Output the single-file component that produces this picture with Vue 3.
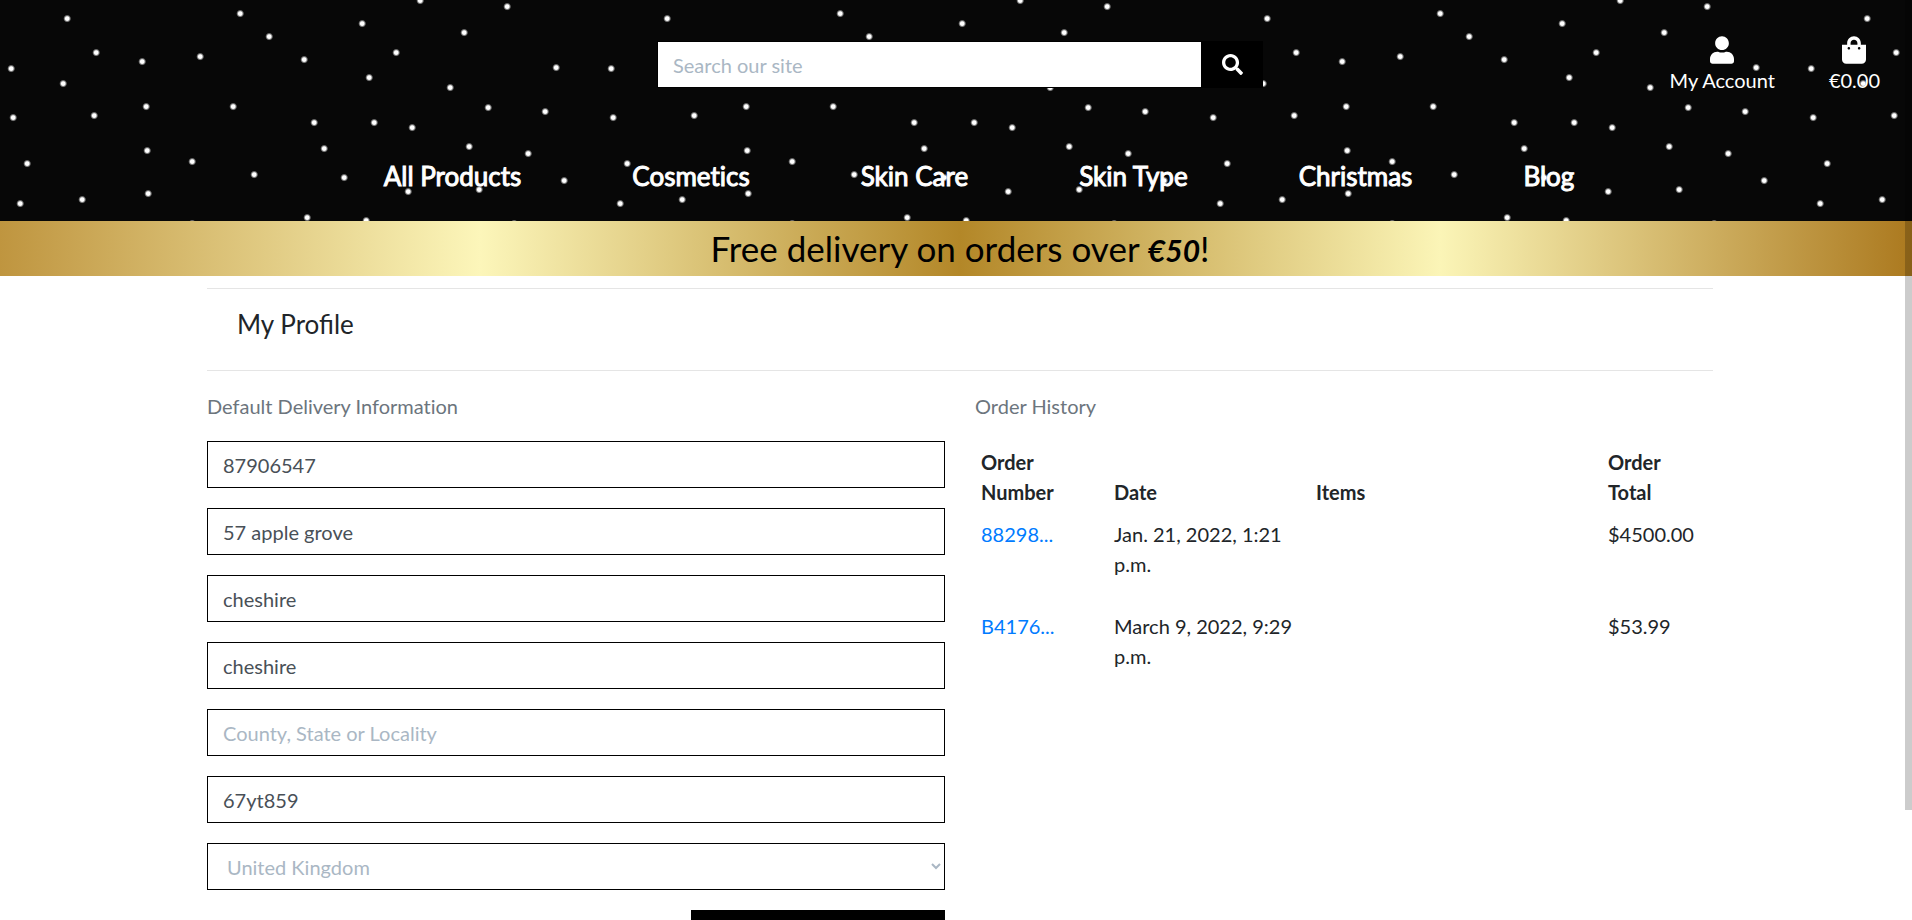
<script setup>
import { ref } from 'vue'

const stars = [
  [67, 18], [240, 13], [420, 0], [362, 23], [464, 32], [269, 36], [96, 52], [142, 61],
  [200, 56], [304, 59], [396, 52], [11, 68], [63, 83], [369, 77], [450, 87], [13, 117],
  [94, 115], [146, 106], [233, 106], [314, 122], [374, 122], [412, 127], [469, 146],
  [147, 150], [192, 161], [324, 148], [27, 163], [254, 174], [344, 177], [20, 203],
  [82, 199], [148, 193], [408, 191], [479, 189], [307, 217], [366, 220], [192, 223],
  [507, 6], [556, 67], [488, 107], [545, 111], [528, 153], [564, 180], [514, 223]
]

const links = ['All Products', 'Cosmetics', 'Skin Care', 'Skin Type', 'Christmas', 'Blog']

const search = ref('')
const fields = ref([
  { id: 'phone', label: 'Phone Number', value: '87906547' },
  { id: 'street1', label: 'Street Address 1', value: '57 apple grove' },
  { id: 'street2', label: 'Street Address 2', value: 'cheshire' },
  { id: 'town', label: 'Town or City', value: 'cheshire' },
  { id: 'county', label: 'County, State or Locality', value: '' },
  { id: 'postcode', label: 'Postal Code', value: '67yt859' }
])
const country = ref('GB')

const orders = [
  { number: '88298...', date: 'Jan. 21, 2022, 1:21 p.m.', total: '$4500.00' },
  { number: 'B4176...', date: 'March 9, 2022, 9:29 p.m.', total: '$53.99' }
]
</script>

<template>
  <div class="viewport">
    <div class="page">
      <header class="header">
        <svg class="sky" aria-hidden="true">
          <defs>
            <radialGradient id="glow">
              <stop offset="0.45" stop-color="#fff" />
              <stop offset="0.7" stop-color="#fff" stop-opacity="0.5" />
              <stop offset="1" stop-color="#fff" stop-opacity="0" />
            </radialGradient>
            <pattern id="stars" width="600" height="240" patternUnits="userSpaceOnUse">
              <circle v-for="(s, i) in stars" :key="i" :cx="s[0] + 0.2" :cy="s[1] + 0.6" r="4" fill="url(#glow)" />
            </pattern>
          </defs>
          <rect width="100%" height="100%" fill="url(#stars)" />
        </svg>

        <div class="top">
          <form class="search" @submit.prevent>
            <input v-model="search" type="text" placeholder="Search our site" aria-label="Search our site" />
            <button type="submit" aria-label="Search">
              <svg viewBox="0 0 512 512" width="21" height="21"><path fill="currentColor" d="M505 442.7L405.3 343c-4.5-4.5-10.6-7-17-7H372c27.6-35.3 44-79.7 44-128C416 93.1 322.9 0 208 0S0 93.1 0 208s93.1 208 208 208c48.3 0 92.7-16.4 128-44v16.3c0 6.4 2.5 12.5 7 17l99.7 99.7c9.4 9.4 24.6 9.4 33.9 0l28.3-28.3c9.4-9.4 9.4-24.6.1-34zM208 336c-70.7 0-128-57.2-128-128 0-70.7 57.2-128 128-128 70.7 0 128 57.2 128 128 0 70.7-57.2 128-128 128z" /></svg>
            </button>
          </form>
          <div class="tools">
            <a href="#account" class="tool">
              <svg viewBox="0 0 448 512" width="24" height="28"><path fill="currentColor" d="M224 256c70.700 0 128-57.300 128-128S294.700 0 224 0 96 57.300 96 128s57.300 128 128 128zm89.600 32h-16.700c-22.200 10.200-46.900 16-72.900 16s-50.600-5.800-72.900-16h-16.700C60.200 288 0 348.200 0 422.400V464c0 26.500 21.500 48 48 48h352c26.500 0 48-21.500 48-48v-41.600c0-74.200-60.200-134.400-134.400-134.400z" /></svg>
              <span>My Account</span>
            </a>
            <a href="#bag" class="tool">
              <svg viewBox="0 0 448 512" width="24" height="28"><path fill="currentColor" d="M352 160v-32C352 57.420 294.579 0 224 0 153.420 0 96 57.420 96 128v32H0v272c0 44.183 35.817 80 80 80h288c44.183 0 80-35.817 80-80V160h-96zm-192-32c0-35.290 28.710-64 64-64s64 28.710 64 64v32H160v-32zm160 120c-13.255 0-24-10.745-24-24s10.745-24 24-24 24 10.745 24 24-10.745 24-24 24zm-192 0c-13.255 0-24-10.745-24-24s10.745-24 24-24 24 10.745 24 24-10.745 24-24 24z" /></svg>
              <span>€0.00</span>
            </a>
          </div>
        </div>

        <nav class="nav">
          <a v-for="l in links" :key="l" href="#">{{ l }}</a>
        </nav>
      </header>

      <div class="banner">Free delivery on orders over <em>€50</em>!</div>

      <main class="container">
        <h2 class="title">My Profile</h2>
        <div class="columns">
          <section>
            <p class="caption">Default Delivery Information</p>
            <form class="form" @submit.prevent>
              <input
                v-for="f in fields"
                :key="f.id"
                v-model="f.value"
                class="control"
                type="text"
                :placeholder="f.label"
                :aria-label="f.label"
              />
              <select v-model="country" class="control" aria-label="Country">
                <option value="GB">United Kingdom</option>
              </select>
              <button class="save" type="submit">Update Information</button>
            </form>
          </section>
          <section>
            <p class="caption">Order History</p>
            <table class="orders">
              <colgroup>
                <col class="c-number" />
                <col class="c-date" />
                <col />
                <col class="c-total" />
              </colgroup>
              <thead>
                <tr>
                  <th>Order Number</th>
                  <th>Date</th>
                  <th>Items</th>
                  <th>Order Total</th>
                </tr>
              </thead>
              <tbody>
                <tr v-for="o in orders" :key="o.number">
                  <td><a href="#">{{ o.number }}</a></td>
                  <td>{{ o.date }}</td>
                  <td></td>
                  <td>{{ o.total }}</td>
                </tr>
              </tbody>
            </table>
          </section>
        </div>
      </main>
    </div>
    <div class="scroll-thumb"></div>
  </div>
</template>

<style>
body {
  margin: 0;
  background: #fff;
}
</style>

<style scoped>
* {
  box-sizing: border-box;
}
.viewport {
  position: relative;
  height: 100vh;
  overflow: hidden;
  font-family: Lato, sans-serif;
  font-size: 20px;
  line-height: 30px;
  font-variant-ligatures: no-common-ligatures;
  color: #212529;
}
.page {
  margin-right: -8px;
}
.scroll-thumb {
  position: absolute;
  top: 0;
  right: 0;
  width: 7px;
  height: 88%;
  background: rgba(0, 0, 0, 0.2);
}
a {
  text-decoration: none;
}
input,
button,
select {
  font: inherit;
  border-radius: 0;
  margin: 0;
}

.header {
  position: relative;
  background: #070707;
  color: #fff;
  padding: 36px 0 24px;
}
.sky {
  position: absolute;
  inset: 0;
  width: 100%;
  height: 100%;
}
.top {
  position: relative;
  display: grid;
  grid-template-columns: repeat(3, 1fr);
  align-items: start;
  padding: 0 6px;
}
.search {
  grid-column: 2;
  display: flex;
  margin: 5px 15px 0;
}
.search input {
  flex: 1;
  min-width: 0;
  height: 47px;
  padding: 0 15px;
  border: 1px solid #000;
  border-right: 0;
  outline: 0;
  background: #fff;
  color: #495057;
}
.search input::placeholder,
.control::placeholder {
  color: #aab7c4;
  opacity: 1;
}
.search button {
  display: flex;
  align-items: center;
  justify-content: center;
  width: 62px;
  padding: 0;
  border: 0;
  background: #000;
  color: #fff;
}
.tools {
  grid-column: 3;
  display: flex;
  justify-content: flex-end;
  gap: 54px;
  padding-right: 34px;
}
.tool {
  display: flex;
  flex-direction: column;
  align-items: center;
  gap: 1px;
  color: #fff;
}
.tool svg {
  display: block;
}
.nav {
  position: relative;
  display: flex;
  justify-content: center;
  gap: 111px;
  margin-top: 60px;
  padding-left: 38px;
}
.nav a {
  color: #fff;
  font-size: 26px;
  line-height: 42px;
  -webkit-text-stroke: 1px #fff;
}

.banner {
  background: linear-gradient(to right, #bf953f, #fcf6ba, #b38728, #fbf5b7, #aa771c);
  color: #000;
  font-size: 35px;
  line-height: 55px;
  text-align: center;
}
.banner em {
  font-weight: 700;
  font-size: 30px;
  line-height: 30px;
}

.container {
  width: 80%;
  margin: 0 auto;
  padding: 12px 15px 0;
}
.title {
  margin: 0;
  padding: 20px 30px 31px;
  border-top: 1px solid #e5e5e5;
  border-bottom: 1px solid #e5e5e5;
  font-size: 26px;
  font-weight: 400;
  font-variant-ligatures: normal;
  line-height: 30px;
}
.columns {
  display: grid;
  grid-template-columns: 1fr 1fr;
  gap: 30px;
  padding-top: 20px;
}
.caption {
  margin: 0 0 20px;
  color: #6c757d;
}
.form {
  display: flex;
  flex-direction: column;
  gap: 20px;
}
.control {
  width: 100%;
  height: 47px;
  padding: 0 15px;
  border: 1px solid #000;
  background: #fff;
  color: #495057;
  outline: 0;
}
select.control {
  color: #aab7c4;
}
.save {
  align-self: flex-end;
  width: 254px;
  padding: 15px;
  border: 0;
  background: #000;
  color: #fff;
}
.orders {
  width: 100%;
  table-layout: fixed;
  border-collapse: collapse;
}
.c-number {
  width: 133px;
}
.c-date {
  width: 202px;
}
.c-total {
  width: 111px;
}
th,
td {
  padding: 6px;
  text-align: left;
  vertical-align: top;
}
th {
  vertical-align: bottom;
  font-weight: 700;
}
td {
  padding-bottom: 26px;
}
td a {
  color: #007bff;
}
</style>
